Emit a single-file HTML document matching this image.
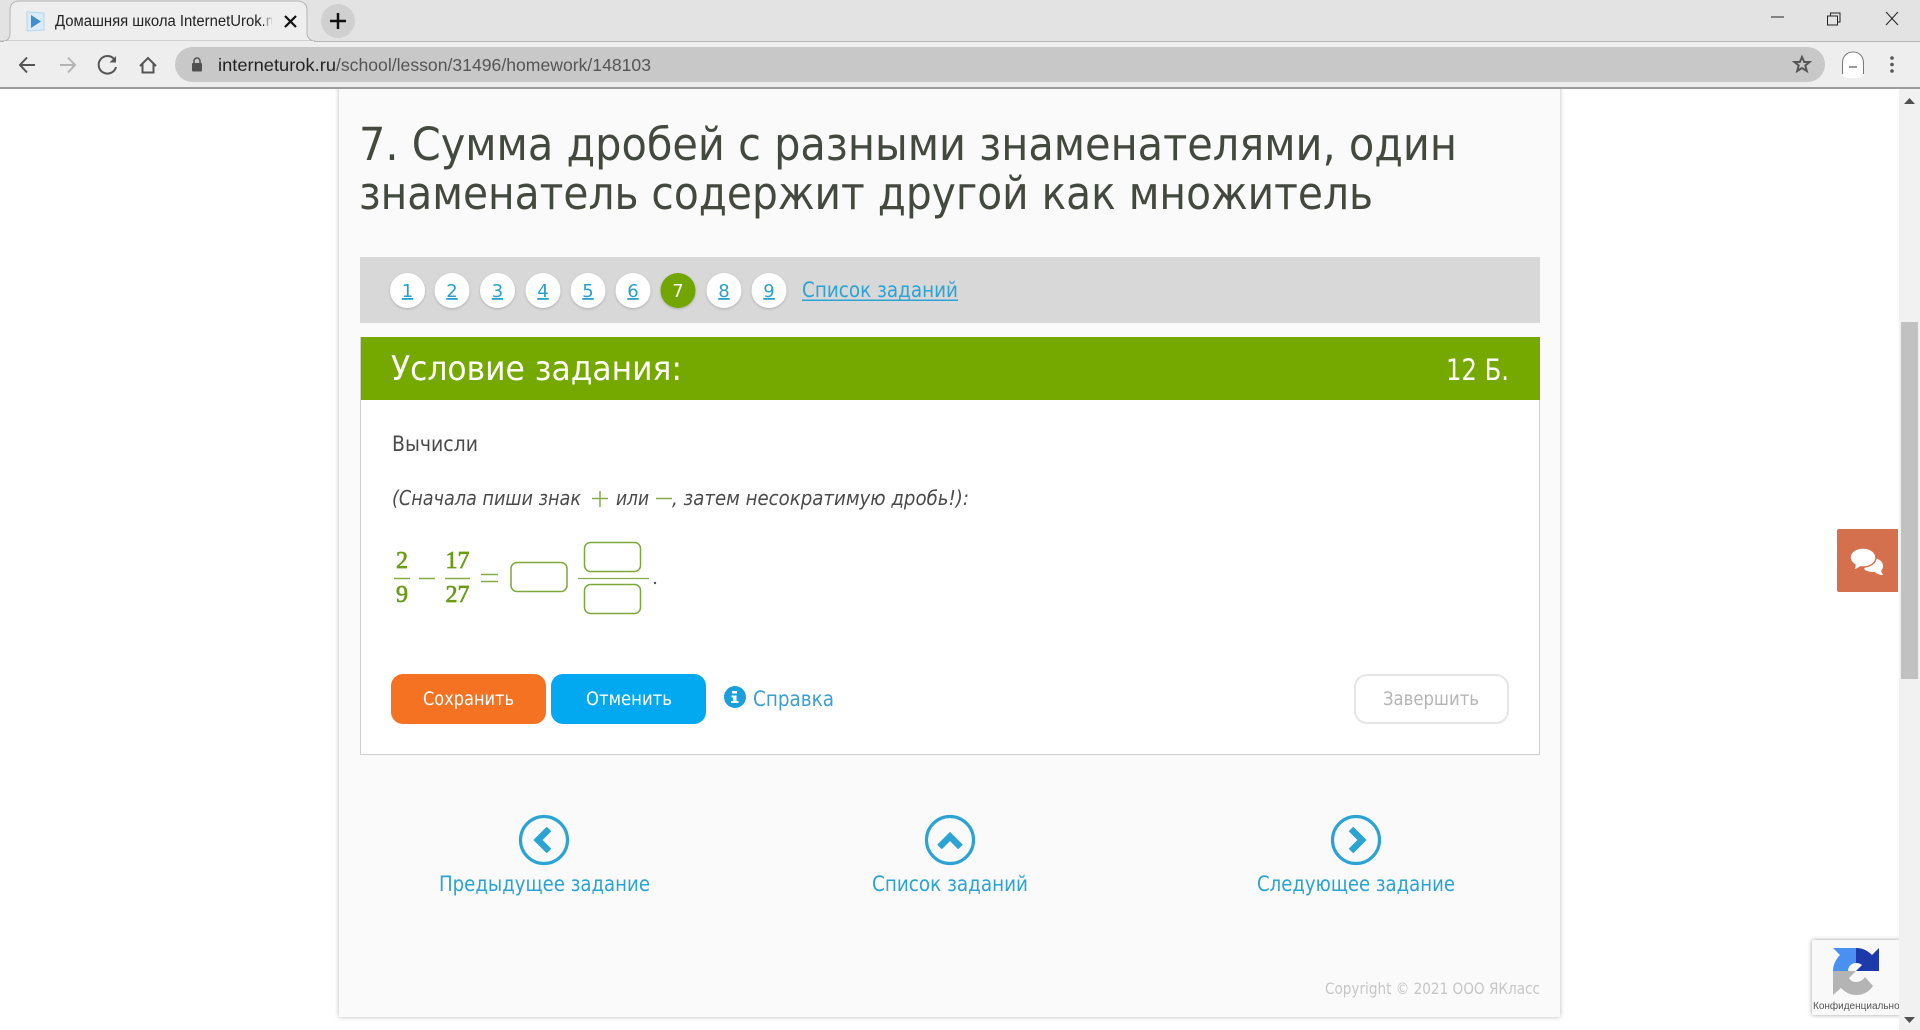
<!DOCTYPE html>
<html lang="ru"><head><meta charset="utf-8"><title>Домашняя школа InternetUrok.ru</title>
<style>
html,body{margin:0;padding:0;background:#fff;width:1920px;height:1030px;overflow:hidden}
svg{display:block;position:absolute;left:0;top:0}
text{font-family:"DejaVu Sans","Liberation Sans",sans-serif;white-space:pre}
.ui{font-family:"Liberation Sans",sans-serif}
.m{font-family:"Liberation Serif",serif;fill:#6d9b18;stroke:#6d9b18;stroke-width:.7;font-size:24px}
.n{font-size:18px;fill:#2a9fc9;text-decoration:underline}
.l{fill:#2ba3d3;font-size:21px}
.i{fill:none;stroke:#7aa83a;stroke-width:1.5}
</style></head><body>
<svg width="1920" height="1030" viewBox="0 0 1920 1030" xmlns="http://www.w3.org/2000/svg">
<defs>
<filter id="s" x="-5%" y="-5%" width="110%" height="110%"><feGaussianBlur stdDeviation="2.5"/></filter>
<filter id="c" x="-30%" y="-30%" width="160%" height="160%"><feDropShadow dx="0" dy="1" stdDeviation="1.2" flood-color="#000" flood-opacity=".2"/></filter>
<clipPath id="rc"><rect x="1812" y="940" width="87" height="75"/></clipPath>
<clipPath id="tc"><rect x="50" y="0" width="222" height="41"/></clipPath>
</defs>
<rect width="1920" height="1030" fill="#fff"/>

<!-- page container -->
<rect x="339" y="80" width="1221" height="937" fill="#888" opacity=".6" filter="url(#s)"/>
<rect x="339" y="80" width="1221" height="937" fill="#fafafa"/>
<text x="359" y="160" font-size="45" fill="#44493f" textLength="1098" lengthAdjust="spacingAndGlyphs">7. Сумма дробей с разными знаменателями, один</text>
<text x="359" y="209" font-size="45" fill="#44493f" textLength="1014" lengthAdjust="spacingAndGlyphs">знаменатель содержит другой как множитель</text>

<!-- nav -->
<rect x="360" y="257" width="1180" height="66" fill="#d8d8d8"/>
<g fill="#fff" filter="url(#c)">
<circle cx="407.5" cy="290.5" r="17.5"/><circle cx="452" cy="290.5" r="17.5"/><circle cx="497.5" cy="290.5" r="17.5"/><circle cx="543" cy="290.5" r="17.5"/><circle cx="588" cy="290.5" r="17.5"/><circle cx="633" cy="290.5" r="17.5"/><circle cx="678" cy="290.5" r="17.5" fill="#73a500"/><circle cx="724" cy="290.5" r="17.5"/><circle cx="769" cy="290.5" r="17.5"/>
</g>
<g text-anchor="middle">
<text class="n" x="407.5" y="297">1</text><text class="n" x="452" y="297">2</text><text class="n" x="497.5" y="297">3</text><text class="n" x="543" y="297">4</text><text class="n" x="588" y="297">5</text><text class="n" x="633" y="297">6</text><text x="678" y="297" font-size="18" fill="#fff">7</text><text class="n" x="724" y="297">8</text><text class="n" x="769" y="297">9</text>
</g>
<text x="802" y="297" font-size="21" fill="#2ba3d3" textLength="156" lengthAdjust="spacingAndGlyphs">Список заданий</text>
<rect x="802" y="299.5" width="156" height="1.5" fill="#2ba3d3"/>

<!-- task -->
<rect x="360.5" y="337.5" width="1179" height="417" fill="#fff" stroke="#cfcfcf"/>
<rect x="361" y="337" width="1179" height="63" fill="#75a900"/>
<text x="391" y="380" font-size="34" fill="#fff" textLength="291" lengthAdjust="spacingAndGlyphs">Условие задания:</text>
<text x="1446" y="380" font-size="29" fill="#fff" textLength="63" lengthAdjust="spacingAndGlyphs">12 Б.</text>

<text x="392" y="451" font-size="21" fill="#4b4b4b" textLength="86" lengthAdjust="spacingAndGlyphs">Вычисли</text>
<g font-style="italic" font-size="20" fill="#4b4b4b">
<text x="392" y="505" textLength="189" lengthAdjust="spacingAndGlyphs">(Сначала пиши знак</text>
<text x="616" y="505" textLength="33" lengthAdjust="spacingAndGlyphs">или</text>
<text x="672" y="505" textLength="297" lengthAdjust="spacingAndGlyphs">, затем несократимую дробь!):</text>
</g>
<path d="M592 498.500H608M600 491V507M656 498.500H672" stroke="#86ad45" stroke-width="1.500" fill="none"/>

<text class="m" x="396" y="568">2</text><text class="m" x="396" y="602">9</text>
<text class="m" x="445.5" y="568">17</text><text class="m" x="445.5" y="602">27</text>
<path d="M394 578.500H410M419 578.500H435M445 578.500H470M481 574.500H498M481 581.500H498" stroke="#86ad45" stroke-width="1.400" fill="none"/>
<rect class="i" x="511" y="562.500" width="56" height="29" rx="6" fill="#fff"/>
<rect class="i" x="584.500" y="542.500" width="56" height="29" rx="6"/>
<path d="M578 578.500H649" stroke="#86ad45" stroke-width="1.200"/>
<rect class="i" x="584.500" y="584.500" width="56" height="29" rx="6"/>
<circle cx="655" cy="583" r="1.200" fill="#555"/>

<!-- buttons -->
<rect x="391" y="674" width="155" height="50" rx="12" fill="#f57223"/>
<rect x="551" y="674" width="155" height="50" rx="12" fill="#03a9f0"/>
<text x="423" y="705" font-size="19" fill="#fff" textLength="91" lengthAdjust="spacingAndGlyphs">Сохранить</text>
<text x="586" y="705" font-size="19" fill="#fff" textLength="86" lengthAdjust="spacingAndGlyphs">Отменить</text>
<circle cx="735" cy="697" r="11" fill="#1b9fdb"/>
<path d="M732 691h5v2.500h-5zM731.500 695.500h5v5.500h2v2h-7.500v-2h2.200v-3.500h-1.700z" fill="#fff"/>
<text x="753" y="706" font-size="21" fill="#3d9fd0" textLength="81" lengthAdjust="spacingAndGlyphs">Справка</text>
<rect x="1355" y="675" width="153" height="48" rx="12" fill="#fff" stroke="#e6e6e6" stroke-width="2"/>
<text x="1383" y="705" font-size="19" fill="#b5b5b5" textLength="96" lengthAdjust="spacingAndGlyphs">Завершить</text>

<!-- bottom nav -->
<g fill="none" stroke="#2ba3d3" stroke-width="3.200">
<circle cx="544" cy="840" r="23.500"/><circle cx="950" cy="840" r="23.500"/><circle cx="1356" cy="840" r="23.500"/>
</g>
<path d="M549 829L538 840L549 851M939.500 847L950 836.500L960.500 847M1351 829L1362 840L1351 851" fill="none" stroke="#2ba3d3" stroke-width="6.500"/>
<text class="l" x="439" y="891" textLength="211" lengthAdjust="spacingAndGlyphs">Предыдущее задание</text>
<text class="l" x="872" y="891" textLength="156" lengthAdjust="spacingAndGlyphs">Список заданий</text>
<text class="l" x="1257" y="891" textLength="198" lengthAdjust="spacingAndGlyphs">Следующее задание</text>
<text x="1325" y="994" font-size="16" fill="#c6c6c6" textLength="215" lengthAdjust="spacingAndGlyphs">Copyright © 2021 ООО ЯКласс</text>

<!-- chat -->
<path d="M1837 531a2 2 0 0 1 2-2h59v63h-59a2 2 0 0 1-2-2z" fill="#d5704f"/>
<path d="M1872 558c6 0 11 3 11 8c0 2-1 4-2 5l2 4c-3 0-6-1-8-3c-3 0-8 0-11-3z" fill="#fff"/>
<path d="M1863 548c7 0 13 4 13 9.500s-6 9.500-13 9.500c-1 0-2 0-3 0c-2 2-5 3-8 3c2-1 3-3 3-5c-3-2-5-4-5-7.500c0-5.500 6-9.500 13-9.500z" fill="#fff" stroke="#d5704f" stroke-width="1.500"/>

<!-- recaptcha -->
<rect x="1812" y="940" width="90" height="75" rx="2" fill="#777" opacity=".7" filter="url(#s)"/>
<rect x="1812" y="940" width="88" height="75" rx="2" fill="#f9f9f9"/>
<path d="M1856 948C1863 948 1868 951 1872 955L1879 948V971H1856L1862 965C1860.500 963.800 1858.500 963 1856 963Z" fill="#1c3aa9"/>
<path d="M1833 971C1833 965 1836 959 1840 955L1833 948H1856V963C1851.500 963 1848 966.500 1848 971Z" fill="#4a90f0"/>
<path d="M1833 971H1856L1849 978C1851 981 1853 982 1856 982C1860 982 1863 980 1865 977L1873 986C1869 992 1863 995 1856 995C1850 995 1845 992 1841 988L1833 995Z" fill="#b4b4b4"/>
<g clip-path="url(#rc)"><text class="ui" x="1813" y="1009" font-size="10" fill="#555">Конфиденциальность</text></g>

<!-- scrollbar -->
<rect x="1899" y="89" width="21" height="941" fill="#f1f1f1"/>
<rect x="1901" y="322" width="17" height="357" fill="#c1c1c1"/>
<path d="M1904 104L1909.500 98L1915 104ZM1904 1017L1909.500 1023L1915 1017Z" fill="#505050"/>

<!-- browser chrome -->
<rect x="0" y="0" width="1920" height="89" fill="#e3e3e3"/>
<rect x="0" y="41" width="1920" height="1" fill="#b4b4b4"/>
<rect x="0" y="42" width="1920" height="45" fill="#eeeeee"/>
<rect x="0" y="87" width="1920" height="2" fill="#9c9c9c"/>
<path d="M0 41H3C8 41 10 38 10 33V10C10 4 14 1 19 1H297C303 1 307 4 307 10V33C307 38 311 41 315 41Z" fill="#eeeeee" stroke="#b4b4b4" stroke-width="1"/>
<rect x="4" y="41" width="310" height="2" fill="#eee"/>
<path d="M27 12L44 13V30L27 31Z" fill="#dcebf8" stroke="#b5d6ef"/>
<path d="M31 15L41 21.500L31 28Z" fill="#3f8fcf"/>
<g clip-path="url(#tc)"><text class="ui" x="55" y="26" font-size="15.500" fill="#222" textLength="224" lengthAdjust="spacingAndGlyphs">Домашняя школа InternetUrok.ru</text></g>
<rect x="264" y="10" width="10" height="24" fill="#eee" opacity=".6"/>
<path d="M285 16L296 27M296 16L285 27" stroke="#111" stroke-width="2.200"/>
<circle cx="338" cy="21" r="17" fill="#d0d0d0"/>
<path d="M330 21H346M338 13V29" stroke="#111" stroke-width="2.500"/>
<path d="M1771 17H1784M1827.500 16H1837.500V25H1827.500ZM1830.500 16V13H1840V22H1837.500M1886 12L1898 25M1898 12L1886 25" fill="none" stroke="#222" stroke-width="1"/>
<!-- toolbar icons -->
<path d="M35 65H20M27 57.500L20 65L27 72.500" fill="none" stroke="#555" stroke-width="2"/>
<path d="M60 65H75M68 57.500L75 65L68 72.500" fill="none" stroke="#b4b4b4" stroke-width="2"/>
<path d="M114.500 59.500A8.800 8.800 0 1 0 116 67" fill="none" stroke="#555" stroke-width="2"/>
<path d="M116 56V62.500H109.500Z" fill="#555"/>
<path d="M140 66L148 58L156 66M142.500 64V72.500H153.500V64" fill="none" stroke="#555" stroke-width="2"/>
<rect x="175" y="47" width="1650" height="35" rx="17.500" fill="#c8c8c8"/>
<rect x="192" y="63" width="10" height="8.500" rx="1" fill="#4f4f4f"/>
<path d="M194 63.500V61a3 3 0 0 1 6 0V63.500" fill="none" stroke="#4f4f4f" stroke-width="1.500"/>
<text class="ui" font-size="17.500" y="71"><tspan x="218" fill="#222" textLength="118" lengthAdjust="spacingAndGlyphs">interneturok.ru</tspan><tspan fill="#555" x="336" textLength="315" lengthAdjust="spacingAndGlyphs">/school/lesson/31496/homework/148103</tspan></text>
<path d="M1802 57L1804.200 62H1809.500L1805.300 65.500L1806.800 71L1802 68L1797.200 71L1798.700 65.500L1794.500 62H1799.800Z" fill="none" stroke="#555" stroke-width="2"/>
<path d="M1842.500 76V63C1842.500 56 1847 52 1853 52C1859 52 1863.500 56 1863.500 63V76C1860 79 1846 79 1842.500 76Z" fill="#fff"/>
<path d="M1842.500 74V63C1842.500 56 1847 52 1853 52C1859 52 1863.500 56 1863.500 63V74" fill="none" stroke="#777" stroke-width="1"/>
<path d="M1849 67H1857" stroke="#555" stroke-width="1.200"/>
<circle cx="1892" cy="58" r="1.800" fill="#555"/><circle cx="1892" cy="64.500" r="1.800" fill="#555"/><circle cx="1892" cy="71" r="1.800" fill="#555"/>
</svg>
</body></html>
